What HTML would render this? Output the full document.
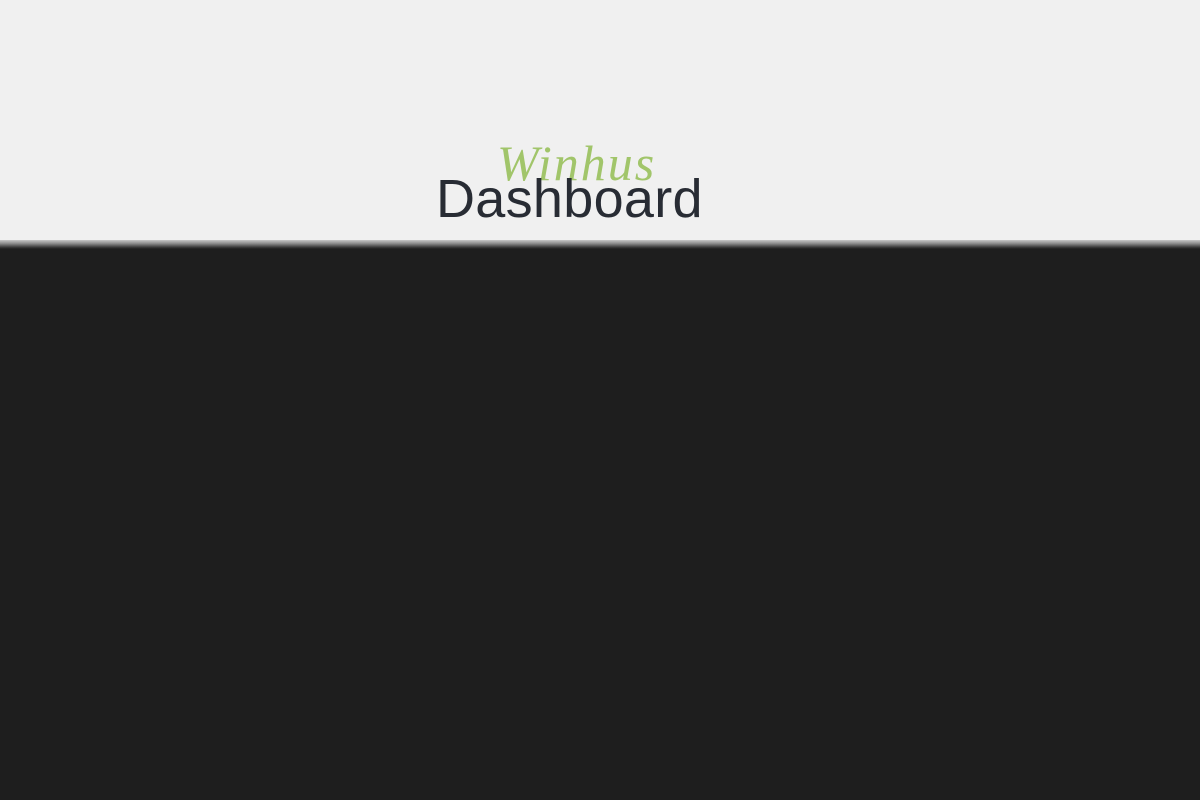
<!DOCTYPE html>
<html><head><meta charset="utf-8"><style>
html,body{margin:0;padding:0;width:1200px;height:800px;overflow:hidden;background:#1e1e1e;}
.top{position:absolute;left:0;top:0;width:1200px;height:240px;background:#f0f0f0;}
.band{position:absolute;left:0;top:240px;width:1200px;height:9px;background:linear-gradient(#c8c8c8,#8a8a8a 40%,#3a3a3a 80%,#1e1e1e);}
.dash{position:absolute;left:436px;top:172px;font:54px/1 "Liberation Sans",sans-serif;color:#282c34;letter-spacing:0.3px;}
.win{position:absolute;left:497px;top:138px;font:italic 50px/1 "Liberation Serif",serif;color:#a1c56a;letter-spacing:2px;}
</style></head><body>
<div class="top"></div>
<div class="band"></div>
<div class="win">Winhus</div>
<div class="dash">Dashboard</div>
</body></html>
